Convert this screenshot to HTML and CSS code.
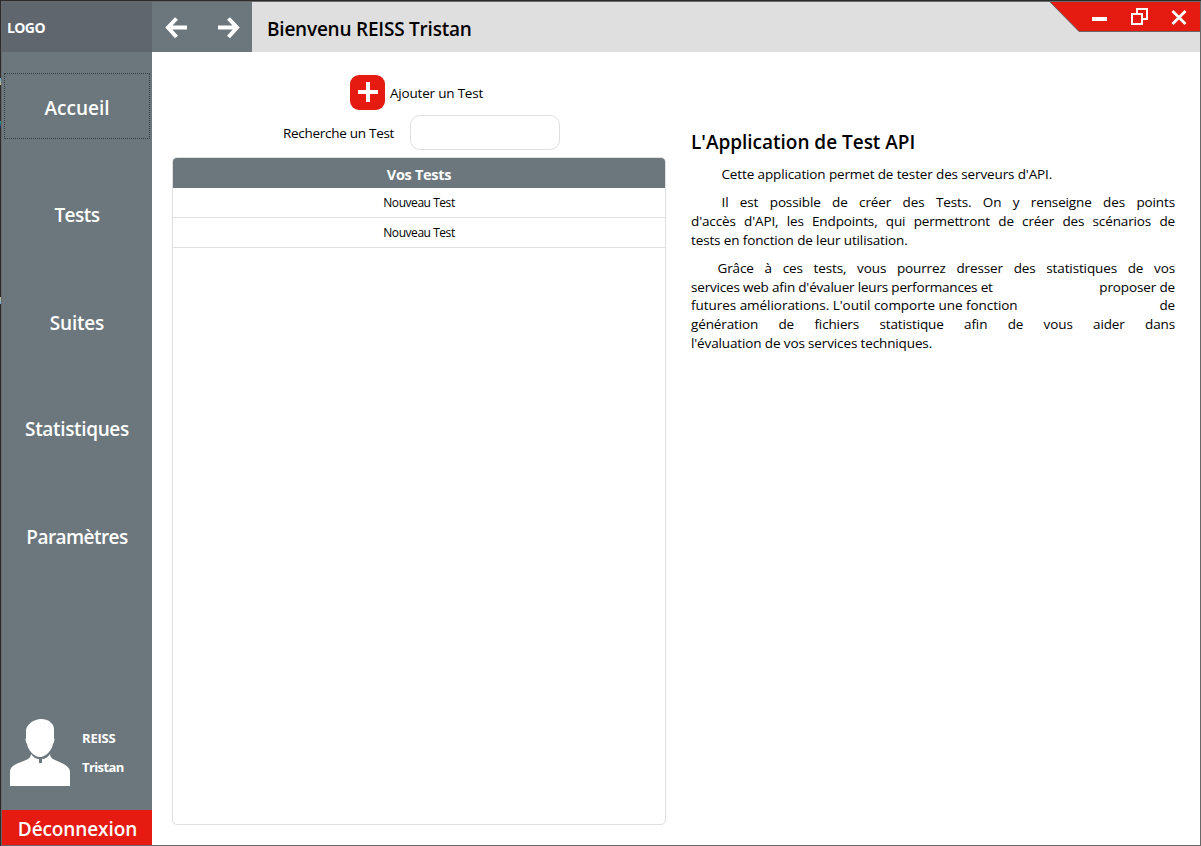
FILE: index.html
```
<!DOCTYPE html>
<html lang="fr">
<head>
<meta charset="utf-8">
<title>Test API</title>
<link rel="stylesheet" href="styles.css">
</head>
<body>
<div class="desktop">
  <div class="window">
    <aside class="sidebar">
      <div class="logo"><span class="t-logo">LOGO</span></div>
      <nav class="nav">
        <a class="nav-item focused"><span class="n1">Accueil</span></a>
        <a class="nav-item"><span class="n2">Tests</span></a>
        <a class="nav-item"><span class="n3">Suites</span></a>
        <a class="nav-item"><span class="n4">Statistiques</span></a>
        <a class="nav-item"><span class="n5">Paramètres</span></a>
      </nav>
      <div class="user">
        <svg class="avatar" width="60" height="68" viewBox="0 0 60 68" fill="#fff">
          <path d="M31 1c4 0 8 1 10 4 2 1 3 4 3 7v8c1 1 0 5-1 6-1 6-7 13-13 13s-12-7-13-13c-1-1-2-5-1-6v-8C17 6 24 1 31 1z"/>
          <path d="M0 68V54c0-7 9-9 16-12 3-1 5-3 5-6 2 3 5 5 8 5v4h3v-4c3 0 6-2 8-5 0 3 2 5 5 6 7 3 15 6 15 12v14z"/>
        </svg>
        <div class="user-name"><span class="u1">REISS</span><span class="u2">Tristan</span></div>
      </div>
      <button class="logout"><span class="t-logout">Déconnexion</span></button>
    </aside>
    <div class="main">
      <header class="header">
        <div class="history">
          <svg width="22" height="22" viewBox="0 0 22 22" fill="none" stroke="#fff" stroke-width="4"><path d="M2.500 10.500H22M11.500 1.500L3 10.500l8.500 9.500"/></svg>
          <svg width="22" height="22" viewBox="0 0 22 22" fill="none" stroke="#fff" stroke-width="4"><path d="M19.500 10.500H0M10.500 1.500L19 10.500l-8.500 9.500"/></svg>
        </div>
        <h1 class="welcome"><span>Bienvenu REISS Tristan</span></h1>
        <svg class="controls" width="150" height="30" viewBox="0 0 150 30">
          <path d="M0 0H150V29.500H29z" fill="#e51b12"/>
          <path d="M0 0L29 29.500H150" fill="none" stroke="#666"/>
          <rect x="42" y="15" width="15" height="4" fill="#fff"/>
          <path d="M87 12V7H97V17H92M82 12H92V22H82z" fill="none" stroke="#fff" stroke-width="2"/>
          <path d="M122.500 9L135.500 22M135.500 9L122.500 22" stroke="#fff" stroke-width="2.800"/>
        </svg>
      </header>
      <div class="content">
        <section class="tests">
          <div class="add">
            <svg width="35" height="35" viewBox="0 0 35 35"><rect width="35" height="35" rx="9" fill="#e51b12"/><path d="M8 17H28M18 7V27" stroke="#fff" stroke-width="4"/></svg>
            <span class="t-add">Ajouter un Test</span>
          </div>
          <label class="search"><span class="t-search">Recherche un Test</span><input class="field" type="text"></label>
          <div class="list">
            <div class="list-head"><span class="t-head">Vos Tests</span></div>
            <div class="row"><span>Nouveau Test</span></div>
            <div class="row"><span>Nouveau Test</span></div>
          </div>
        </section>
        <article class="about">
          <h2><span>L'Application de Test API</span></h2>
          <div class="para">
            <div class="line indent natural">Cette application permet de tester des serveurs d'API.</div>
          </div>
          <div class="para">
            <div class="line indent">Il est possible de créer des Tests. On y renseigne des points</div>
            <div class="line">d'accès d'API, les Endpoints, qui permettront de créer des scénarios de</div>
            <div class="line natural">tests en fonction de leur utilisation.</div>
          </div>
          <div class="para">
            <div class="line indent-small">Grâce à ces tests, vous pourrez dresser des statistiques de vos</div>
            <div class="split"><span class="part-a">services web afin d'évaluer leurs performances et</span><span>proposer de</span></div>
            <div class="split"><span class="part-b">futures améliorations. L'outil comporte une fonction</span><span>de</span></div>
            <div class="line">génération de fichiers statistique afin de vous aider dans</div>
            <div class="line natural">l'évaluation de vos services techniques.</div>
          </div>
        </article>
      </div>
    </div>
  </div>
</div>
</body>
</html>
```
FILE: styles.css
```
* { box-sizing: border-box; }
body { margin: 0; font-family: "Open Sans", "Noto Sans", sans-serif; color: #000; overflow: hidden; }
span { white-space: nowrap; }
.desktop {
  width: 1201px; height: 846px; padding: 1px 0 0 1px;
  background:
    linear-gradient(#4aa6d8, #d5c48a) 0 78px / 1px 7px no-repeat,
    linear-gradient(#23a09a, #25255e) 0 121px / 1px 7px no-repeat,
    linear-gradient(#c9bd8b, #67aee0) 0 297px / 1px 7px no-repeat,
    #2d2a2b;
}
.window { display: flex; width: 1200px; height: 845px; border: 1px solid #686868; background: #fff; }
.sidebar { display: flex; flex-direction: column; width: 150px; background: #6c777d; color: #fff; font-weight: 600; }
.logo { display: flex; align-items: center; height: 50px; padding: 1px 0 0 5px; background: #60666d; font-size: 14px; font-weight: 700; letter-spacing: -0.6px; }
.nav { display: grid; grid-template-rows: repeat(5, 107.3px); }
.nav-item { display: flex; align-items: center; justify-content: center; margin: 21px 2px 20px; padding-top: 3px; font-size: 19px; border: 1px dashed transparent; }
.focused { border-color: #343a3d; border-style: dotted; }
.n2 { letter-spacing: -0.5px; }
.n3 { letter-spacing: -0.2px; padding-top: 1px; }
.n4 { letter-spacing: -0.35px; padding-bottom: 1px; }
.n5 { letter-spacing: -0.55px; }
.user { display: flex; flex: 1; padding: 130px 0 0 8px; gap: 12px; }
.user-name { display: flex; flex-direction: column; font-size: 13px; line-height: 29px; padding-top: 6px; font-weight: 700; }
.u1 { letter-spacing: -0.2px; }
.u2 { letter-spacing: -0.6px; }
.logout { display: flex; align-items: center; justify-content: center; height: 35px; padding: 3px 0 0 1px; border: 0; background: #e51b12; color: #fff; font: 600 19px "Open Sans", sans-serif; letter-spacing: -0.1px; }
.main { display: flex; flex-direction: column; flex: 1; }
.header { display: flex; height: 50px; background: #dfdfdf; }
.history { display: flex; gap: 31px; width: 100px; padding: 15px 0 0 13px; background: #6c777d; }
.welcome { flex: 1; margin: 0; padding: 4px 0 0 15px; font-size: 19px; line-height: 46px; font-weight: 600; letter-spacing: -0.22px; }
.controls { display: block; }
.content { display: flex; flex: 1; padding: 23px 25px 20px 20px; gap: 25px; }
.tests { display: flex; flex-direction: column; width: 494px; }
.add { display: flex; align-items: center; gap: 5px; padding-left: 178px; height: 35px; font-size: 13.5px; letter-spacing: -0.2px; }
.search { display: flex; align-items: center; height: 35px; margin: 5px 0 7px; padding-left: 111px; font-size: 13.5px; letter-spacing: -0.28px; }
.t-search { width: 127px; }
.field { width: 150px; height: 35px; border: 1px solid #dfdfdf; border-radius: 10px; background: #fff; outline: none; }
.list { flex: 1; border: 1px solid #dfdfdf; border-radius: 5px; overflow: hidden; }
.list-head { height: 30px; padding-top: 2px; background: #6c777d; color: #fff; font-size: 14.5px; line-height: 30px; font-weight: 700; text-align: center; letter-spacing: -0.3px; }
.row { height: 30px; border-bottom: 1px solid #dfdfdf; font-size: 12px; line-height: 30px; text-align: center; letter-spacing: -0.45px; }
.about { width: 484px; padding-top: 53px; font-size: 13.5px; line-height: 18.7px; letter-spacing: -0.13px; }
.about h2 { margin: 0 0 9px; font-size: 19px; line-height: 28px; font-weight: 600; letter-spacing: -0.02px; }
.para { margin-bottom: 9.5px; }
.line { white-space: nowrap; text-align: justify; text-align-last: justify; }
.natural { text-align-last: left; }
.indent { padding-left: 30.5px; }
.indent-small { padding-left: 26.5px; }
.split { display: flex; justify-content: space-between; }
.part-a { letter-spacing: -0.19px; }
.part-b { letter-spacing: -0.04px; }
```
